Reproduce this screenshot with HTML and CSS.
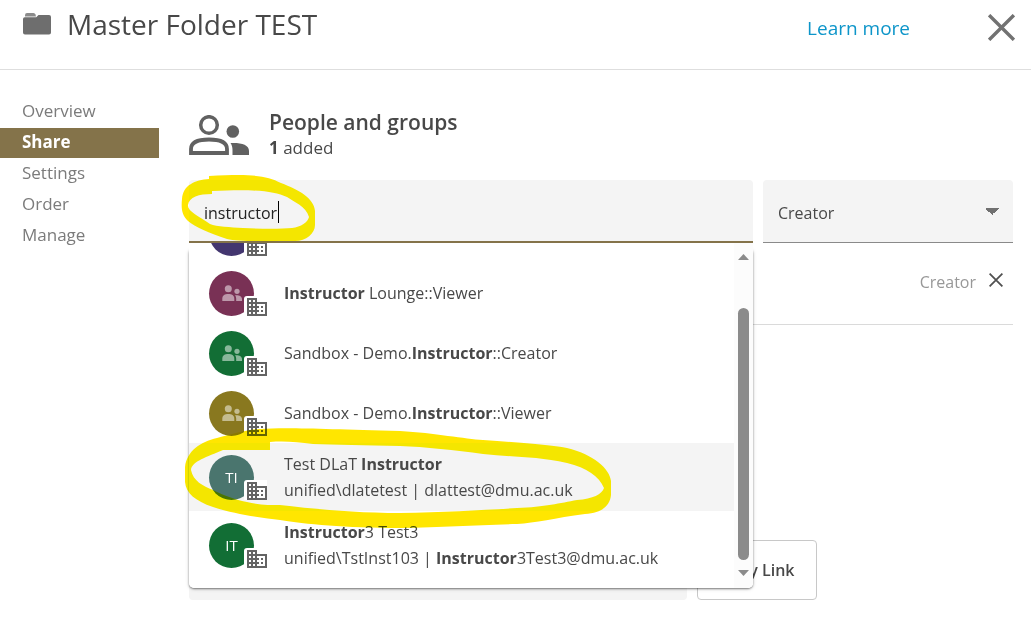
FILE: index.html
```
<!DOCTYPE html>
<html lang="en">
<head>
<meta charset="utf-8">
<title>Master Folder TEST</title>
<link rel="stylesheet" href="styles.css">
</head>
<body>
<svg class="defs" aria-hidden="true">
  <symbol id="people" viewBox="0 0 20 16">
    <circle cx="6.3" cy="3.7" r="3.5"/>
    <path d="M.3 16v-2.3C.3 10.400 3 9 6.300 9s6 1.400 6 4.700V16z"/>
    <circle cx="15" cy="6.300" r="2.600"/>
    <path d="M13 10.200c3.800-.4 7 .8 7 3.800v2h-5.800v-2.300c0-1.400-.4-2.500-1.200-3.500z"/>
  </symbol>
  <symbol id="building" viewBox="0 0 20 18">
    <path fill-rule="evenodd" d="M0 0h10v4h10v14H0zM2 2v2h2V2zM6 2v2h2V2zM2 6v2h2V6zM6 6v2h2V6zM2 10v2h2v-2zM6 10v2h2v-2zM2 14v2h2v-2zM6 14v2h2v-2zM10 6v2h2v2h-2v2h2v2h-2v2h8V6zM14 8h2v2h-2zM14 12h2v2h-2z"/>
  </symbol>
  <symbol id="cross" viewBox="0 0 24 24">
    <path d="M1 1 23 23M23 1 1 23" fill="none" stroke="currentColor"/>
  </symbol>
</svg>

<header class="header">
  <svg class="folder" viewBox="0 0 28 22" aria-hidden="true"><path d="M2 3.500V2.200Q2 0 4 0h6.500Q12 0 12.500 1.500L13 3.500z" opacity=".8"/><path d="M0 6q0-1.800 1.800-1.800h11.400L15.500 2H26q2 0 2 2v15.500q0 2-2 2H2q-2 0-2-2z"/></svg>
  <h1 class="title">Master Folder TEST</h1>
  <a class="learn" href="#">Learn more</a>
  <button class="close" type="button" aria-label="Close"><svg aria-hidden="true"><use href="#cross"/></svg></button>
</header>

<div class="body">
  <nav class="nav">
    <a href="#">Overview</a>
    <a class="active" href="#" aria-current="page">Share</a>
    <a href="#">Settings</a>
    <a href="#">Order</a>
    <a href="#">Manage</a>
  </nav>

  <main class="main">
    <div class="intro">
      <svg class="group-icon" viewBox="0 0 60 40" aria-hidden="true">
        <circle cx="20" cy="10" r="8.300" fill="none" stroke="#616161" stroke-width="3.500"/>
        <path d="M2 38v-4c0-7 8-9.500 18-9.500S38 27 38 34v4z" fill="none" stroke="#616161" stroke-width="3.800"/>
        <circle cx="43.800" cy="16.500" r="6.300"/>
        <path d="M41.500 28C52 27.500 60 29.500 60 36v4H43.500v-5c0-3-.6-5-2-7z"/>
      </svg>
      <div>
        <h2 class="heading">People and groups</h2>
        <p class="count"><b>1</b> added</p>
      </div>
    </div>

    <div class="invite">
      <div class="search">
        <input class="search-input" type="text" value="instructor" aria-label="Add people">
        <span class="caret"></span>
        <div class="menu">
          <ul class="list">
            <li class="row"><span class="avatar indigo"><svg class="people"><use href="#people"/></svg><span class="badge"><svg><use href="#building"/></svg></span></span><span><b>Instructor</b> Lounge::Creator</span></li>
            <li class="row"><span class="avatar plum"><svg class="people"><use href="#people"/></svg><span class="badge"><svg><use href="#building"/></svg></span></span><span><b>Instructor</b> Lounge::Viewer</span></li>
            <li class="row"><span class="avatar green"><svg class="people"><use href="#people"/></svg><span class="badge"><svg><use href="#building"/></svg></span></span><span>Sandbox - Demo.<b>Instructor</b>::Creator</span></li>
            <li class="row"><span class="avatar olive"><svg class="people"><use href="#people"/></svg><span class="badge"><svg><use href="#building"/></svg></span></span><span>Sandbox - Demo.<b>Instructor</b>::Viewer</span></li>
            <li class="row user current"><span class="avatar teal">TI<span class="badge"><svg><use href="#building"/></svg></span></span><span>Test DLaT <b>Instructor</b><br>unified\dlatetest | dlattest@dmu.ac.uk</span></li>
            <li class="row user"><span class="avatar green">IT<span class="badge"><svg><use href="#building"/></svg></span></span><span><b>Instructor</b>3 Test3<br>unified\TstInst103 | <b>Instructor</b>3Test3@dmu.ac.uk</span></li>
          </ul>
          <div class="scrollbar" aria-hidden="true">
            <svg viewBox="0 0 11 6"><path d="M0 6 5.500 0 11 6z"/></svg>
            <span class="thumb"></span>
            <svg viewBox="0 0 11 6"><path d="M0 0h11L5.500 6z"/></svg>
          </div>
        </div>
        <svg class="marker marker-search" viewBox="0 0 136 68" aria-hidden="true">
          <path fill-rule="evenodd" d="M28 1C70-1 85 0 100 8c18 7 33 15 34 28v14c0 9-10 17-22 16-22 0-54 1-66-2C28 58 14 52 7 46 1 40 0 34 1 24 2 10 14 5 28 4zM31 16V19C18 19 8 22 7 30c-1 6 11 11 22 19 7 3 20 3 33 4 20 1 38 1 49 0 9-1 16-6 17-11-3-11-15-15-22-20C92 16 74 14 31 16z"/>
        </svg>
        <svg class="marker marker-row" viewBox="0 0 426 102" aria-hidden="true">
          <path fill-rule="evenodd" d="M32 11C48 7 60 3 75 2 100 0 140 2 215 4 250 6 280 12 298 13 340 16 365 18 382 21 408 27 425 42 426 54V68C425 78 418 86 400 87 370 91 350 96 332 97 290 98 260 100 215 101 160 101 120 97 95 93 75 91 45 86 28 80 10 74 1 66 0 55V40C2 24 15 15 32 11zM85 15V23H38C22 30 7 34 6 43 8 54 18 59 28 63 40 69 52 73 62 75 75 78 85 78 95 78 130 82 170 86 215 86 260 85 300 83 332 81 360 80 375 76 392 73 408 72 417 67 419 61 414 49 402 41 382 36 350 29 325 30 298 27 270 23 240 20 215 19 180 18 150 18 128 17 112 15 100 14 85 15z"/>
        </svg>
      </div>
      <select class="role" aria-label="Role"><option>Creator</option></select>
    </div>

    <div class="member">
      <span>Creator</span>
      <button class="remove" type="button" aria-label="Remove"><svg aria-hidden="true"><use href="#cross"/></svg></button>
    </div>

    <div class="link-row">
      <input class="link-input" type="text" readonly aria-label="Link">
      <button class="copy" type="button">Copy Link</button>
    </div>
  </main>
</div>
</body>
</html>
```
FILE: styles.css
```
* { box-sizing: border-box; }
body {
  margin: 0;
  background: #fff;
  color: #484848;
  font: 16px/26px "Open Sans", "Noto Sans", sans-serif;
  overflow-x: hidden;
}
h1, h2, p, ul { margin: 0; padding: 0; }
b { font-weight: 700; }
button { border: 0; background: none; padding: 0; font: inherit; color: inherit; }
.defs { position: absolute; width: 0; height: 0; }

.header {
  display: flex;
  align-items: center;
  height: 70px;
  padding: 0 16px 14px 23px;
  border-bottom: 1px solid #dedede;
}
.folder { width: 28px; height: 22px; margin-right: 16px; margin-bottom: 8px; fill: #6e6e6e; }
.title { flex: 1; font-size: 28px; line-height: 40px; font-weight: 400; margin-bottom: 8px; }
.learn { color: #0d95c9; font-size: 19px; text-decoration: none; margin-right: 78px; }
.close { display: flex; color: #727272; }
.close svg { width: 27px; height: 27px; stroke-width: 3; }

.body { display: flex; padding-top: 27px; }
.nav { display: flex; flex-direction: column; gap: 1px; width: 159px; font-size: 17px; }
.nav a { padding: 0 22px 2px; line-height: 28px; color: #7b7b7b; text-decoration: none; }
.nav .active { background: #84734a; color: #fff; font-weight: 700; }

.main { flex: 1; padding: 13px 18px 22px 30px; }
.intro { display: flex; align-items: center; gap: 20px; height: 50px; }
.group-icon { width: 60px; height: 40px; fill: #616161; }
.heading { font-size: 21px; line-height: 26px; font-weight: 600; }
.count { font-size: 17px; line-height: 26px; }

.invite { display: flex; gap: 10px; margin-top: 20px; }
.search { position: relative; flex: 1; display: flex; }
.search-input {
  flex: 1;
  min-width: 0;
  height: 63px;
  padding: 4px 15px 0;
  border: 0;
  border-bottom: 2px solid #84734a;
  border-radius: 4px 4px 0 0;
  background: #f4f4f4;
  color: #222;
  font: inherit;
  outline: 0;
}
.caret { position: absolute; left: 89px; top: 21px; width: 1px; height: 22px; background: #000; }
.role {
  appearance: none;
  width: 250px;
  height: 63px;
  padding: 4px 15px 0;
  border: 0;
  border-bottom: 1px solid #8a8a8a;
  border-radius: 4px 4px 0 0;
  color: inherit;
  font: inherit;
  background-color: #f4f4f4;
  background-image: linear-gradient(to bottom left, #707070 50%, transparent 50%), linear-gradient(to bottom right, #707070 50%, transparent 50%);
  background-position: right 21px top 28px, right 14px top 28px;
  background-size: 7px 7px;
  background-repeat: no-repeat;
}

.menu {
  position: absolute;
  z-index: 2;
  top: 63px;
  left: 0;
  right: 0;
  height: 345px;
  display: flex;
  overflow: hidden;
  background: #fff;
  border-radius: 0 0 5px 5px;
}
.search::after {
  content: "";
  position: absolute;
  z-index: 1;
  top: 68px;
  left: 0;
  right: 0;
  height: 340px;
  border-radius: 5px;
  box-shadow: 0 1px 2px rgba(0, 0, 0, .45), 0 1px 4px rgba(0, 0, 0, .15);
}
.list { flex: 1; display: flex; flex-direction: column; justify-content: flex-end; padding-bottom: 9px; list-style: none; }
.row { flex: none; display: flex; align-items: center; gap: 30px; height: 60px; padding: 0 20px; }
.user { height: 68px; }
.current { background: #f4f4f4; }
.avatar {
  position: relative;
  display: flex;
  align-items: center;
  justify-content: center;
  width: 45px;
  height: 45px;
  border-radius: 50%;
  color: #fff;
  font-size: 15px;
}
.indigo { background: #43366f; }
.plum { background: #793155; }
.green { background: #126e35; }
.olive { background: #89781f; }
.teal { background: #4a756e; }
.people { width: 20px; height: 16px; fill: #fff; opacity: .5; }
.badge { position: absolute; left: 35px; top: 25px; width: 23px; height: 20px; background: #fff; border-radius: 3px 0 0 0; display: flex; align-items: flex-end; justify-content: flex-end; }
.badge svg { width: 20px; height: 18px; fill: #646464; }
.scrollbar { width: 19px; display: flex; flex-direction: column; align-items: center; padding: 11px 0 12px; background: #fcfcfc; }
.scrollbar svg { width: 11px; height: 6px; fill: #8b8b8b; }
.thumb { flex: 1; width: 11px; margin: 48px 0 10px; border-radius: 6px; background: #8b8b8b; }

.marker { position: absolute; z-index: 3; fill: #ffe600; mix-blend-mode: darken; pointer-events: none; }
.marker-search { left: -8px; top: -5px; width: 136px; height: 68px; }
.marker-row { left: -4px; top: 247px; width: 426px; height: 102px; }

.member { display: flex; justify-content: flex-end; align-items: center; gap: 13px; height: 82px; padding: 0 10px 4px 0; border-bottom: 1px solid #dadada; color: #989898; }
.remove { display: flex; margin-bottom: 4px; color: #505050; }
.remove svg { width: 14px; height: 14px; stroke-width: 3; }

.link-row { display: flex; gap: 10px; margin-top: 215px; }
.link-input { flex: 0 1 498px; min-width: 0; height: 60px; border: 0; border-radius: 4px; background: #f4f4f4; }
.copy { width: 120px; height: 60px; border: 1px solid #c8c8c8; border-radius: 4px; font-weight: 600; }
```
